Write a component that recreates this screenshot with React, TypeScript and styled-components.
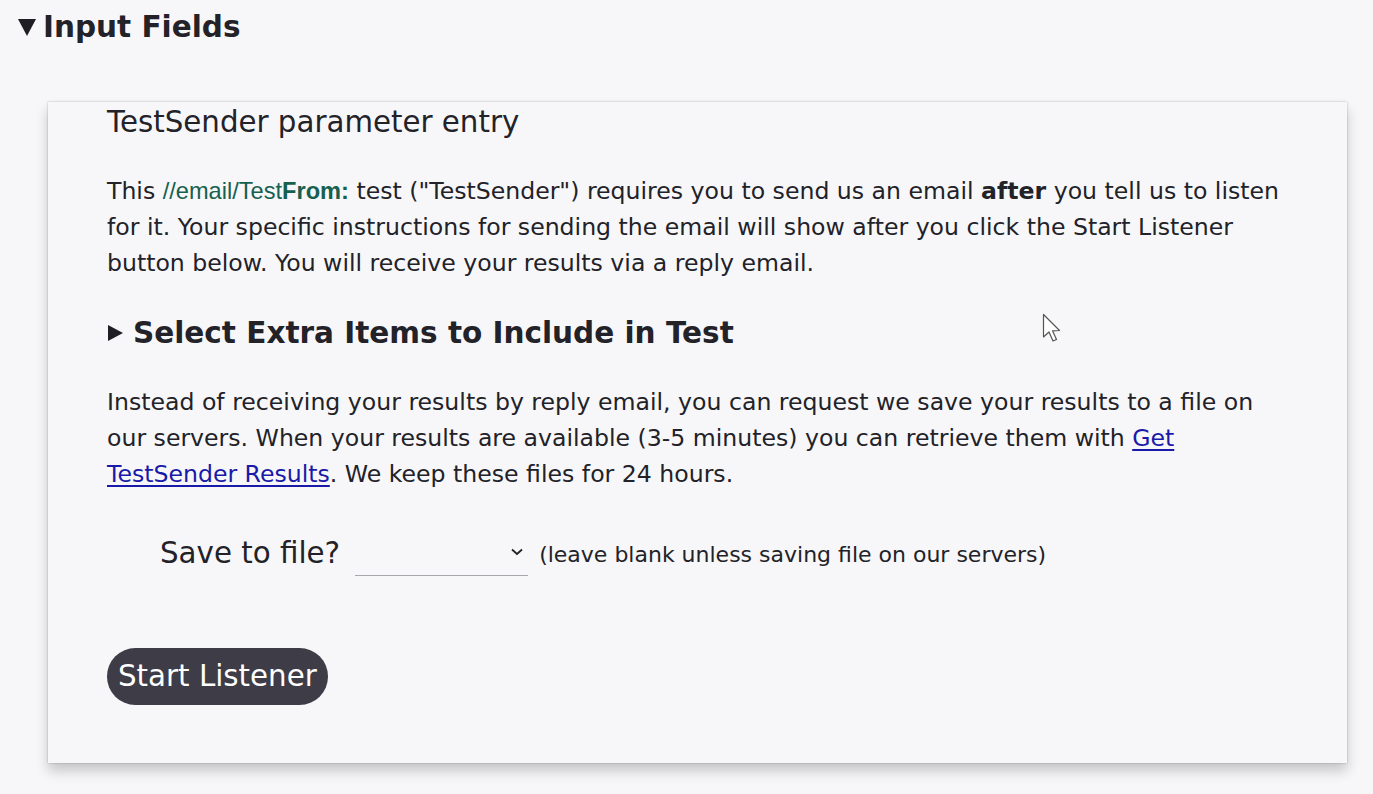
import React from 'react';
import styled, { createGlobalStyle } from 'styled-components';

const GlobalStyle = createGlobalStyle`
  html, body {
    margin: 0;
    padding: 0;
    background: #f7f7f9;
    color: #222228;
    font-family: "DejaVu Sans", Verdana, sans-serif;
  }
`;

const Page = styled.div`
  position: relative;
  width: 1373px;
  height: 794px;
  overflow: hidden;
`;

const Details = styled.div`
  display: flex;
  flex-direction: column;
`;

const Summary = styled.div<{ $size: number; $indent: number; $gap: number }>`
  display: flex;
  align-items: center;
  gap: ${(p) => p.$gap}px;
  padding-left: ${(p) => p.$indent}px;
  font-size: ${(p) => p.$size}px;
  font-weight: 700;
  line-height: 38px;
`;

const TopSummary = styled(Summary)`
  margin-top: 8px;
`;

const Caret = styled.span<{ $open?: boolean; $size: number }>`
  display: inline-block;
  width: 0;
  height: 0;
  ${(p) =>
    p.$open
      ? `border-left: ${p.$size * 0.55}px solid transparent;
         border-right: ${p.$size * 0.55}px solid transparent;
         border-top: ${p.$size}px solid #1e1e24;`
      : `border-top: ${p.$size * 0.55}px solid transparent;
         border-bottom: ${p.$size * 0.55}px solid transparent;
         border-left: ${p.$size}px solid #1e1e24;`}
`;

const Card = styled.section`
  margin: 56px 26px 0 48px;
  height: 661px;
  box-sizing: border-box;
  background: #f7f7f9;
  box-shadow: 0 8px 12px rgba(0, 0, 0, 0.2), 0 0 2px rgba(0, 0, 0, 0.25);
  padding: 0 60px 0 59px;
  display: flex;
  flex-direction: column;
`;

const Title = styled.h2`
  margin: 0;
  font-size: 29.3px;
  font-weight: 400;
  line-height: 40px;
`;

const Paragraph = styled.p<{ $top: number }>`
  margin: ${(p) => p.$top}px 0 0;
  font-size: 23.6px;
  line-height: 35.8px;
`;

const Code = styled.span`
  font-family: "Liberation Sans", Arial, sans-serif;
  color: #16604f;
`;

const CodeBold = styled.b`
  font-weight: 700;
`;

const Link = styled.a`
  color: #1a1aa8;
  text-decoration: underline;
  text-underline-offset: 3px;
`;

const ExtraWrap = styled.div`
  margin-top: 33px;
`;

const SaveRow = styled.div`
  display: flex;
  align-items: center;
  height: 40px;
  margin-top: 40px;
  padding-left: 53px;
`;

const SaveLabel = styled.label`
  font-size: 29.3px;
  margin-right: 15px;
`;

const SelectBox = styled.div`
  position: relative;
  width: 173px;
  height: 32px;
  margin-top: 14px;
  margin-right: 11px;
  border-bottom: 1.5px solid #a7a7ad;
  box-sizing: border-box;
`;

const Chevron = styled.svg`
  position: absolute;
  right: 4px;
  top: 3px;
`;

const Hint = styled.span`
  font-size: 22px;
  margin-top: 4px;
`;

const StartButton = styled.button`
  align-self: flex-start;
  margin-top: 75px;
  height: 57px;
  padding: 0 11px;
  border: none;
  border-radius: 29px;
  background: #3d3c47;
  color: #ffffff;
  font-family: "DejaVu Sans", Verdana, sans-serif;
  font-size: 29.3px;
  cursor: pointer;
`;

const Pointer = styled.svg`
  position: absolute;
  left: 1042px;
  top: 313px;
`;

export default function App() {
  return (
    <Page>
      <GlobalStyle />
      <Details>
        <TopSummary $size={29.5} $indent={18} $gap={7}>
          <Caret $open $size={17} />
          <span>Input Fields</span>
        </TopSummary>
        <Card>
          <Title>TestSender parameter entry</Title>
          <Paragraph $top={32}>
            This{' '}
            <Code>
              //email/Test<CodeBold>From:</CodeBold>
            </Code>{' '}
            test ("TestSender") requires you to send us an email <b>after</b> you tell us to listen for it. Your
            specific instructions for sending the email will show after you click the Start Listener button below.
            You will receive your results via a reply email.
          </Paragraph>
          <ExtraWrap>
            <Summary $size={29.5} $indent={1} $gap={10}>
              <Caret $size={15} />
              <span>Select Extra Items to Include in Test</span>
            </Summary>
          </ExtraWrap>
          <Paragraph $top={33}>
            Instead of receiving your results by reply email, you can request we save your results to a file on our
            servers. When your results are available (3-5 minutes) you can retrieve them with{' '}
            <Link href="#">Get TestSender Results</Link>. We keep these files for 24 hours.
          </Paragraph>
          <SaveRow>
            <SaveLabel>Save to file?</SaveLabel>
            <SelectBox>
              <Chevron width="14" height="10" viewBox="0 0 14 10">
                <path d="M2 2.5 L7 7 L12 2.5" fill="none" stroke="#222" strokeWidth="1.8" />
              </Chevron>
            </SelectBox>
            <Hint>(leave blank unless saving file on our servers)</Hint>
          </SaveRow>
          <StartButton>Start Listener</StartButton>
        </Card>
      </Details>
      <Pointer width="22" height="32" viewBox="0 0 22 32">
        <path d="M1.5 1.5 L1.5 24 L7 19 L11 28 L14.5 26.5 L10.5 17.8 L17.5 17.5 Z" fill="#fff" stroke="#555" strokeWidth="1.2" strokeLinejoin="round" />
      </Pointer>
    </Page>
  );
}
